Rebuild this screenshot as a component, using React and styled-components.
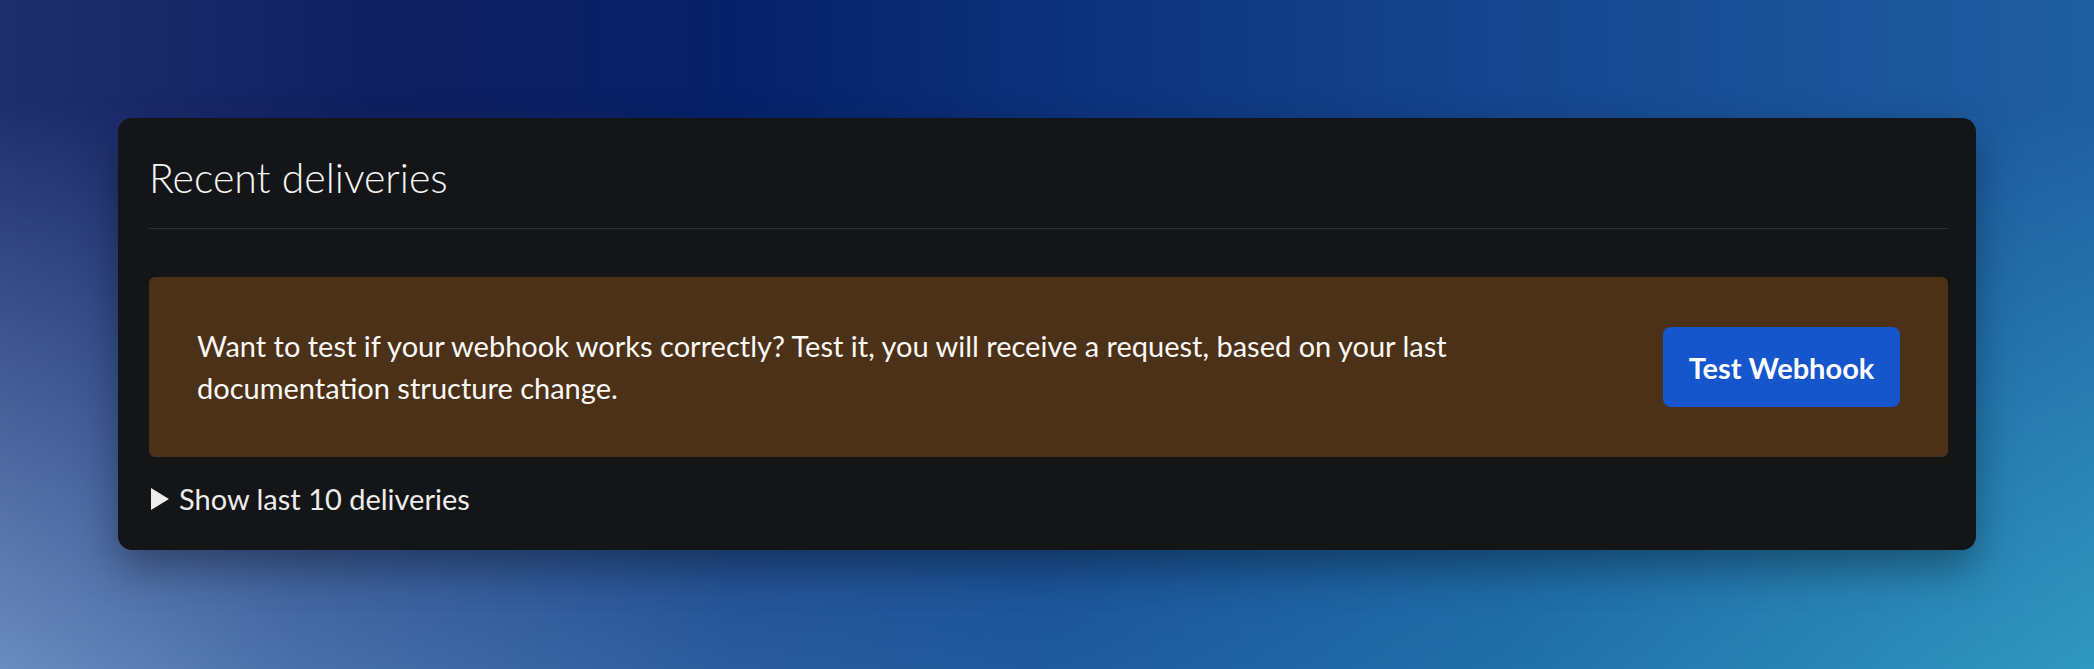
import React from "react";
import styled, { createGlobalStyle } from "styled-components";

const GlobalStyle = createGlobalStyle`
  html, body {
    margin: 0;
    padding: 0;
  }
  body {
    font-family: Lato, "Noto Sans", "Liberation Sans", sans-serif;
    -webkit-font-smoothing: antialiased;
  }
`;

const Page = styled.div`
  position: relative;
  z-index: 0;
  box-sizing: border-box;
  width: 100%;
  height: 669px;
  padding: 118px 118px 0 118px;
  background: linear-gradient(
    to right,
    #1f2f6e 0%,
    #101f60 18%,
    #06216a 35%,
    #0e3680 55%,
    #15468f 72%,
    #1f5ea2 100%
  );
  overflow: hidden;

  &::before {
    content: "";
    position: absolute;
    inset: 0;
    z-index: -1;
    background: linear-gradient(
      to right,
      #6a8cc0 0%,
      #4a70aa 14%,
      #2a5c9e 35%,
      #1f5a9e 50%,
      #2070aa 72%,
      #3099c0 100%
    );
    -webkit-mask-image: linear-gradient(to bottom, transparent 15%, black 100%);
    mask-image: linear-gradient(to bottom, transparent 15%, black 100%);
  }
`;

const Card = styled.section`
  box-sizing: border-box;
  background: #141516;
  border-radius: 14px;
  padding: 32px 28px 30px 31px;
  box-shadow: 0 18px 40px rgba(0, 0, 0, 0.35);
  color: #f4f4f4;
`;

const Title = styled.h2`
  margin: 0;
  padding-bottom: 22px;
  font-size: 41px;
  line-height: 56px;
  font-weight: 300;
  color: #f5f5f5;
  border-bottom: 1px solid #2c2e32;
`;

const Banner = styled.div`
  display: flex;
  align-items: center;
  justify-content: space-between;
  gap: 40px;
  height: 180px;
  box-sizing: border-box;
  margin-top: 48px;
  padding: 0 48px;
  background: #4c3119;
  border-radius: 6px;
`;

const Message = styled.p`
  margin: 0;
  max-width: 1330px;
  font-size: 29px;
  line-height: 42px;
  color: #fbf8f5;
`;

const Button = styled.button`
  flex-shrink: 0;
  width: 237px;
  height: 80px;
  border: none;
  border-radius: 8px;
  background: #1556cc;
  color: #ffffff;
  font-family: inherit;
  font-size: 29px;
  font-weight: 700;
  cursor: pointer;
`;

const Details = styled.details`
  margin-top: 21px;
`;

const Summary = styled.summary`
  display: flex;
  align-items: center;
  gap: 10px;
  list-style: none;
  font-size: 29px;
  line-height: 42px;
  color: #ececec;
  cursor: pointer;

  &::-webkit-details-marker {
    display: none;
  }
`;

const Caret = styled.span`
  width: 0;
  height: 0;
  border-top: 11px solid transparent;
  border-bottom: 11px solid transparent;
  border-left: 18px solid #ececec;
  margin-left: 2px;
`;

export default function App() {
  return (
    <>
      <GlobalStyle />
      <Page>
        <Card>
          <Title>Recent deliveries</Title>
          <Banner>
            <Message>
              Want to test if your webhook works correctly? Test it, you will
              receive a request, based on your last documentation structure
              change.
            </Message>
            <Button type="button">Test Webhook</Button>
          </Banner>
          <Details>
            <Summary>
              <Caret />
              Show last 10 deliveries
            </Summary>
          </Details>
        </Card>
      </Page>
    </>
  );
}
